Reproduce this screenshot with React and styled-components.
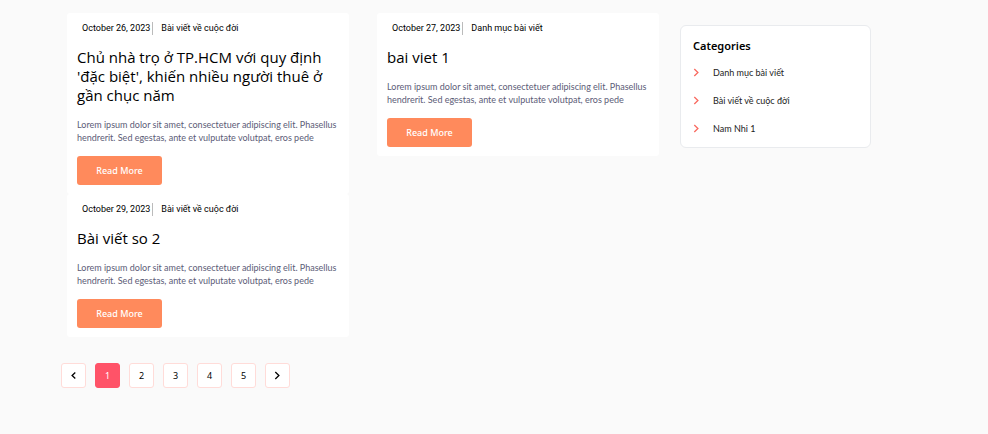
import React from "react";
import styled, { createGlobalStyle } from "styled-components";

const GlobalStyle = createGlobalStyle`
  * { box-sizing: border-box; }
  body {
    margin: 0;
    background: #fafafa;
    color: #000;
    font: 9px/13px Lato, "Noto Sans", sans-serif;
  }
  a { color: inherit; text-decoration: none; }
  button { font: inherit; cursor: pointer; }
`;

const headingFont = `"Noto Sans", "Open Sans", sans-serif`;

const Page = styled.div`
  display: grid;
  grid-template-columns: minmax(0, 598fr) minmax(0, 191fr);
  column-gap: 21px;
  align-items: start;
  padding: 13px 117px 24px 61px;

  @media (max-width: 760px) {
    grid-template-columns: 1fr;
    padding: 13px 20px;
  }
`;

const Posts = styled.div`
  display: grid;
  grid-template-columns: repeat(2, minmax(0, 1fr));
  column-gap: 28px;
  align-items: start;
  padding-left: 6px;

  @media (max-width: 520px) {
    grid-template-columns: 1fr;
  }
`;

const Card = styled.article`
  padding: 9px 10px;
  background: #fff;
  border-radius: 3px;
`;

const Meta = styled.div`
  display: flex;
  padding-left: 5px;
  font-family: Roboto, "Noto Sans", sans-serif;
`;

const PostDate = styled.time`
  padding-right: 2px;
  border-right: 1px solid #bbb;
`;

const PostCategory = styled.a`
  padding-left: 8px;
`;

const Title = styled.h2`
  margin: 13px 0;
  font-family: "Open Sans", "Noto Sans", sans-serif;
  font-size: 15px;
  line-height: 19px;
  font-weight: 400;
`;

const Excerpt = styled.p`
  margin: 0 0 12px;
  color: #5c5c77;
`;

const ReadMore = styled.button`
  display: block;
  min-width: 85px;
  padding: 8px 18px;
  border: 0;
  border-radius: 3px;
  background: #ff8a5c;
  color: #fff;
  font-family: ${headingFont};
  font-weight: 500;
`;

const Pagination = styled.nav`
  display: flex;
  gap: 9px;
  margin-top: 26px;
`;

const PageButton = styled.button`
  display: grid;
  place-items: center;
  width: 25px;
  height: 25px;
  padding: 0;
  border: 1px solid ${(p) => (p.$active ? "#ff5368" : "#ffdcd9")};
  border-radius: 3px;
  background: ${(p) => (p.$active ? "#ff5368" : "#fff")};
  color: ${(p) => (p.$active ? "#fff" : "#000")};
  font-family: ${headingFont};
`;

const Sidebar = styled.aside`
  margin-top: 12px;
  padding: 13px 12px 12px;
  border: 1px solid #e9ebee;
  border-radius: 6px;
  background: #fff;
`;

const SidebarTitle = styled.h3`
  margin: 0 0 13px;
  font-family: ${headingFont};
  font-size: 11px;
  line-height: 14px;
  font-weight: 600;
`;

const CategoryList = styled.ul`
  display: grid;
  gap: 15px;
  margin: 0;
  padding: 0;
  list-style: none;
`;

const CategoryLink = styled.a`
  display: flex;
  align-items: center;
  gap: 13px;
  color: #222;

  svg { color: #f9695f; }
`;

const Chevron = ({ left }) => (
  <svg width="7" height="9" viewBox="0 0 7 9" fill="none" stroke="currentColor" strokeWidth="1.3" aria-hidden="true">
    <path d={left ? "M5.3 1.5 2.1 4.5l3.2 3" : "M1.3 1 4.9 4.5 1.3 8"} />
  </svg>
);

const excerpt =
  "Lorem ipsum dolor sit amet, consectetuer adipiscing elit. Phasellus hendrerit. Sed egestas, ante et vulputate volutpat, eros pede";

const columns = [
  [
    {
      date: "October 26, 2023",
      iso: "2023-10-26",
      category: "Bài viết về cuộc đời",
      title: "Chủ nhà trọ ở TP.HCM với quy định 'đặc biệt', khiến nhiều người thuê ở gần chục năm",
    },
    {
      date: "October 29, 2023",
      iso: "2023-10-29",
      category: "Bài viết về cuộc đời",
      title: "Bài viết so 2",
    },
  ],
  [
    {
      date: "October 27, 2023",
      iso: "2023-10-27",
      category: "Danh mục bài viết",
      title: "bai viet 1",
    },
  ],
];

const categories = ["Danh mục bài viết", "Bài viết về cuộc đời", "Nam Nhi 1"];

const Post = ({ post }) => (
  <Card>
    <Meta>
      <PostDate dateTime={post.iso}>{post.date}</PostDate>
      <PostCategory href="#category">{post.category}</PostCategory>
    </Meta>
    <Title>
      <a href="#post">{post.title}</a>
    </Title>
    <Excerpt>{excerpt}</Excerpt>
    <ReadMore type="button">Read More</ReadMore>
  </Card>
);

export default function App() {
  return (
    <>
      <GlobalStyle />
      <Page>
        <main>
          <Posts>
            {columns.map((posts, i) => (
              <div key={i}>
                {posts.map((post) => (
                  <Post key={post.iso} post={post} />
                ))}
              </div>
            ))}
          </Posts>
          <Pagination aria-label="Pagination">
            <PageButton type="button" aria-label="Previous page">
              <Chevron left />
            </PageButton>
            {[1, 2, 3, 4, 5].map((n) => (
              <PageButton key={n} type="button" $active={n === 1} aria-current={n === 1 ? "page" : undefined}>
                {n}
              </PageButton>
            ))}
            <PageButton type="button" aria-label="Next page">
              <Chevron />
            </PageButton>
          </Pagination>
        </main>
        <Sidebar>
          <SidebarTitle>Categories</SidebarTitle>
          <CategoryList>
            {categories.map((name) => (
              <li key={name}>
                <CategoryLink href="#category">
                  <Chevron />
                  {name}
                </CategoryLink>
              </li>
            ))}
          </CategoryList>
        </Sidebar>
      </Page>
    </>
  );
}
